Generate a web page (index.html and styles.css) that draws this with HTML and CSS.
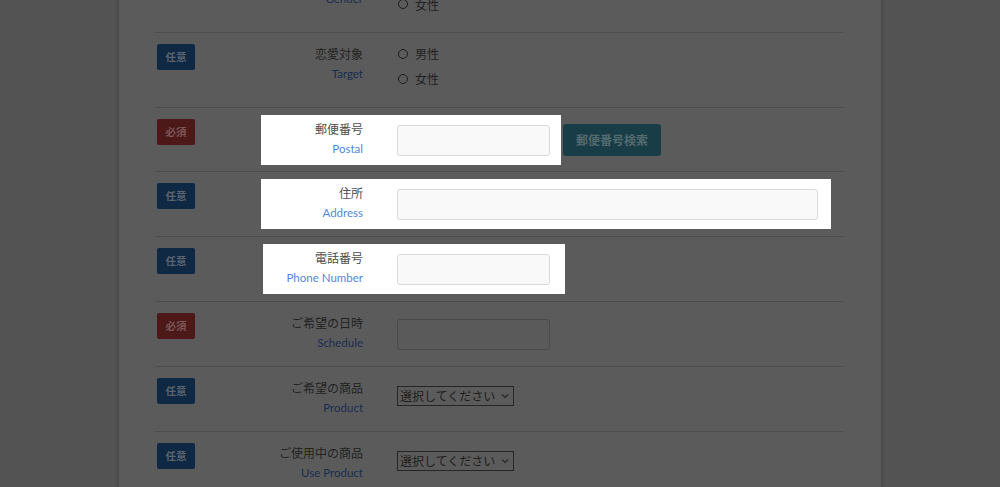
FILE: index.html
```html
<!DOCTYPE html>
<html lang="ja">
<head>
<meta charset="utf-8">
<title>Form</title>
<link rel="stylesheet" href="styles.css">
</head>
<body>
<div class="page">
  <div class="card">
    <div class="row">
      <span class="badge badge-opt">任意</span>
      <div class="group">
        <div class="label"><span class="jp">性別</span><span class="en">Gender</span></div>
        <ul class="radios">
          <li><span class="radio"></span>男性</li>
          <li><span class="radio"></span>女性</li>
        </ul>
      </div>
    </div>
    <div class="row">
      <span class="badge badge-opt">任意</span>
      <div class="group">
        <div class="label"><span class="jp">恋愛対象</span><span class="en">Target</span></div>
        <ul class="radios">
          <li><span class="radio"></span>男性</li>
          <li><span class="radio"></span>女性</li>
        </ul>
      </div>
    </div>
    <div class="row">
      <span class="badge badge-req">必須</span>
      <div class="group hl">
        <div class="label"><span class="jp">郵便番号</span><span class="en">Postal</span></div>
        <div class="input"></div>
      </div>
      <span class="search-btn">郵便番号検索</span>
    </div>
    <div class="row">
      <span class="badge badge-opt">任意</span>
      <div class="group hl hl-wide">
        <div class="label"><span class="jp">住所</span><span class="en">Address</span></div>
        <div class="input input-wide"></div>
      </div>
    </div>
    <div class="row">
      <span class="badge badge-opt">任意</span>
      <div class="group hl hl-phone">
        <div class="label"><span class="jp">電話番号</span><span class="en">Phone Number</span></div>
        <div class="input"></div>
      </div>
    </div>
    <div class="row">
      <span class="badge badge-req">必須</span>
      <div class="group">
        <div class="label"><span class="jp">ご希望の日時</span><span class="en">Schedule</span></div>
        <div class="input"></div>
      </div>
    </div>
    <div class="row">
      <span class="badge badge-opt">任意</span>
      <div class="group">
        <div class="label"><span class="jp">ご希望の商品</span><span class="en">Product</span></div>
        <div class="select">選択してください<svg class="chev" width="8" height="6" viewBox="0 0 8 6"><polyline points="1,1.5 4,4.5 7,1.5" fill="none" stroke="#262626" stroke-width="1.1"/></svg></div>
      </div>
    </div>
    <div class="row">
      <span class="badge badge-opt">任意</span>
      <div class="group">
        <div class="label"><span class="jp">ご使用中の商品</span><span class="en">Use Product</span></div>
        <div class="select">選択してください<svg class="chev" width="8" height="6" viewBox="0 0 8 6"><polyline points="1,1.5 4,4.5 7,1.5" fill="none" stroke="#262626" stroke-width="1.1"/></svg></div>
      </div>
    </div>
    <div class="row">
      <span class="badge badge-opt">任意</span>
      <div class="group">
        <div class="label"><span class="jp">お問い合わせ内容</span><span class="en">Message</span></div>
        <div class="input input-wide"></div>
      </div>
    </div>
  </div>
</div>
</body>
</html>
```
FILE: styles.css
```css
html, body {
  margin: 0;
  padding: 0;
  background: #535353;
  height: 100%;
  overflow: hidden;
}
body {
  font-family: Lato, "Noto Sans CJK JP", sans-serif;
}
.page {
  width: 1000px;
  height: 487px;
  overflow: hidden;
}
.card {
  width: 764px;
  box-sizing: border-box;
  margin: -42px auto 0;
  padding: 0 38px 40px 36px;
  background: #5b5b5b;
  border-left: 1px solid #4c4c4c;
  border-right: 1px solid #4c4c4c;
  box-shadow: 0 0 3px rgba(0, 0, 0, 0.22);
}
.row {
  display: flex;
  align-items: flex-start;
  padding: 7px 0 6.8px;
  border-bottom: 1px solid #4d4d4d;
}
.badge {
  flex: none;
  margin: 4px 0 0 2px;
  width: 38px;
  height: 26px;
  border-radius: 2px;
  font-family: "Noto Sans CJK JP", sans-serif;
  font-size: 10.5px;
  font-weight: 700;
  line-height: 26px;
  text-align: center;
}
.badge-opt {
  background: #0f2844;
  color: #5a6470;
}
.badge-req {
  background: #4c1818;
  color: #7c5656;
}
.group {
  display: flex;
  align-items: flex-start;
  margin-left: 66px;
  padding: 4px 11px 6px 0;
}
.group.hl {
  background: #ffffff;
}
.group.hl-phone {
  margin-left: 68px;
  padding-right: 15px;
}
.group.hl-phone .label {
  width: 100px;
}
.group.hl-wide {
  padding-right: 13px;
}
.label {
  width: 102px;
  margin-right: 34px;
  display: flex;
  flex-direction: column;
  align-items: flex-end;
  line-height: 20px;
  text-align: right;
}
.jp {
  font-family: "Noto Sans CJK JP", sans-serif;
  font-size: 12px;
  color: #222222;
  white-space: nowrap;
}
.en {
  font-family: Lato, sans-serif;
  font-size: 11.5px;
  color: #1a2d50;
  white-space: nowrap;
}
.hl .jp {
  color: #4d4d4d;
}
.hl .en {
  color: #5088e0;
}
.input {
  margin-top: 6px;
  width: 153px;
  height: 31px;
  box-sizing: border-box;
  border: 1px solid #4a4a4a;
  border-radius: 3px;
  background: #5a5a5a;
}
.input-wide {
  width: 421px;
}
.hl .input {
  background: #f9f9f9;
  border-color: #dadada;
}
.search-btn {
  flex: none;
  margin: 9px 0 0 2px;
  width: 98px;
  height: 32px;
  box-sizing: border-box;
  border-radius: 3px;
  background: #183d46;
  color: #536a70;
  font-family: "Noto Sans CJK JP", sans-serif;
  font-size: 12px;
  font-weight: 700;
  line-height: 32px;
  text-align: center;
}
.radios {
  list-style: none;
  margin: 0;
  padding: 0 0 5px;
  display: flex;
  flex-direction: column;
  gap: 5px;
}
.radios li {
  display: flex;
  align-items: center;
  gap: 7px;
  height: 20px;
  font-family: "Noto Sans CJK JP", sans-serif;
  font-size: 12px;
  color: #222222;
}
.radio {
  width: 10px;
  height: 10px;
  margin-left: 1px;
  box-sizing: border-box;
  border: 1.3px solid #1e1e1e;
  border-radius: 50%;
}
.select {
  margin-top: 8px;
  display: inline-flex;
  align-items: center;
  gap: 6px;
  height: 20px;
  box-sizing: border-box;
  padding: 0 4px 0 2px;
  border: 1px solid #262626;
  font-family: "Noto Sans CJK JP", sans-serif;
  font-size: 12px;
  color: #1e1e1e;
  white-space: nowrap;
}
.chev {
  display: block;
}
```
